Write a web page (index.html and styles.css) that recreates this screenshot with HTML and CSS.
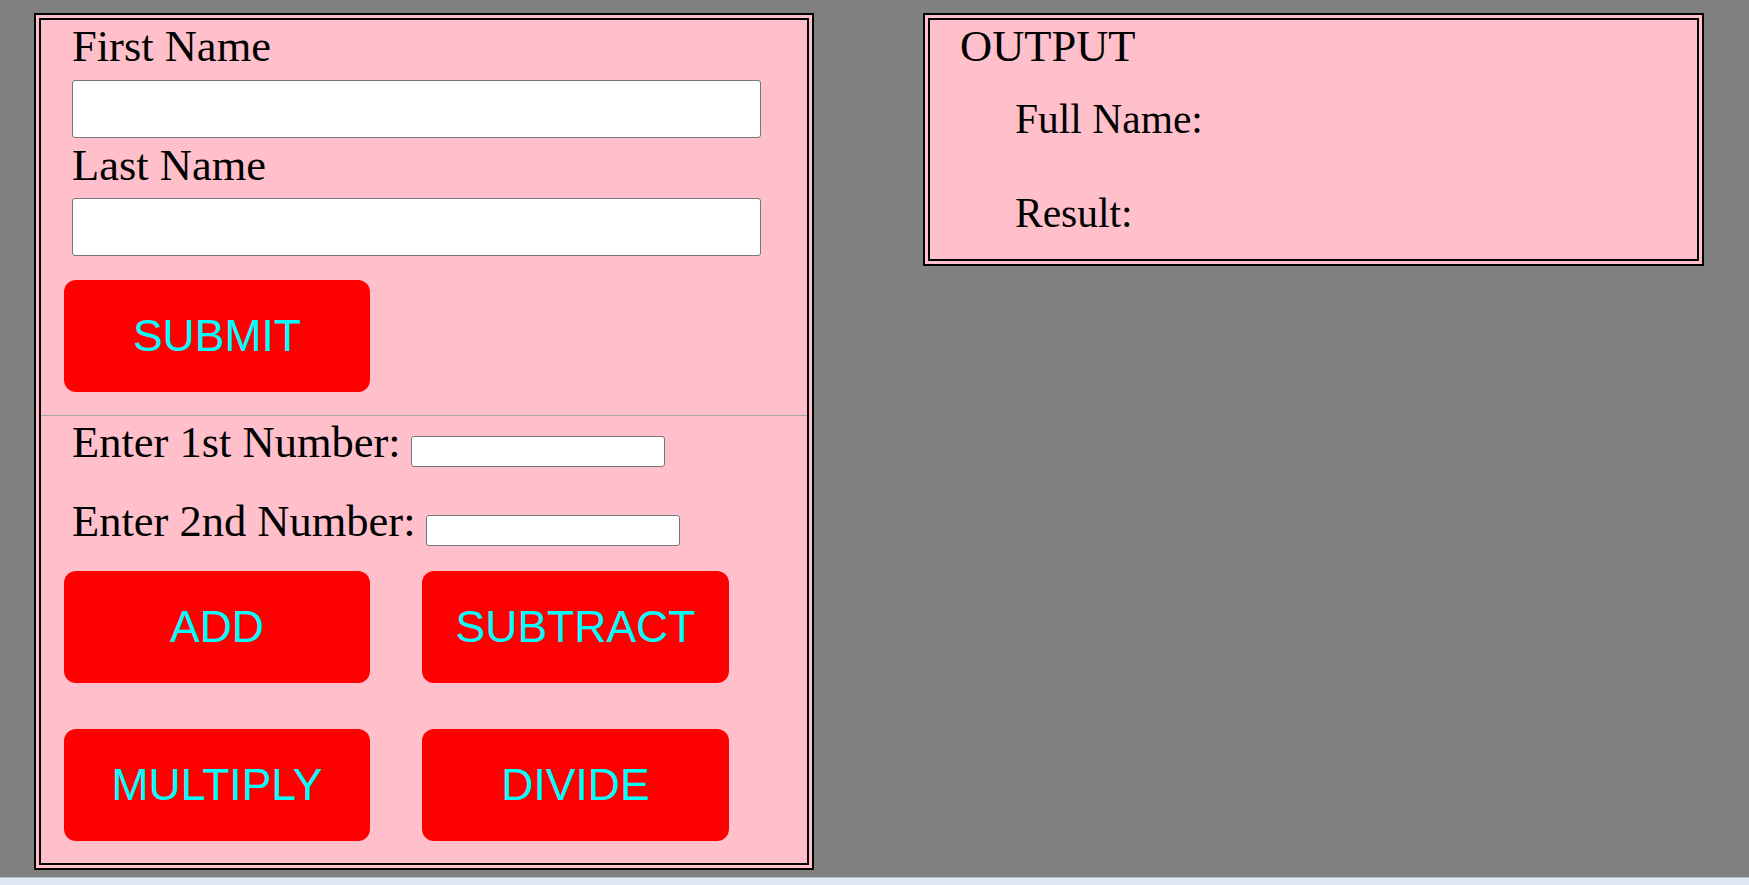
FILE: index.html
```html
<!DOCTYPE html>
<html lang="en">
<head>
<meta charset="utf-8">
<title>Calculator</title>
<link rel="stylesheet" href="styles.css">
</head>
<body>
<div class="page">
  <div class="panel panel-left">
    <div class="panel-inner">
      <div class="name-section">
        <label class="field-label">First Name</label>
        <input class="text-input first" type="text">
        <label class="field-label next">Last Name</label>
        <input class="text-input second" type="text">
        <button class="btn submit">SUBMIT</button>
      </div>
      <div class="calc-section">
        <div class="num-row">
          <label class="num-label">Enter 1st Number:</label>
          <input class="num-input" type="text">
        </div>
        <div class="num-row next-row">
          <label class="num-label">Enter 2nd Number:</label>
          <input class="num-input" type="text">
        </div>
        <div class="btn-grid">
          <button class="btn">ADD</button>
          <button class="btn">SUBTRACT</button>
          <button class="btn">MULTIPLY</button>
          <button class="btn">DIVIDE</button>
        </div>
      </div>
    </div>
  </div>
  <div class="panel panel-right">
    <div class="panel-inner output-inner">
      <div class="output-title">OUTPUT</div>
      <div class="output-line full">Full Name:</div>
      <div class="output-line result">Result:</div>
    </div>
  </div>
</div>
</body>
</html>
```

FILE: styles.css
```css
html {
  background: #e0e8f4;
}

body {
  margin: 0;
  background: #808080;
  height: 877px;
  border-bottom: 1px solid #b3bac6;
  font-family: "Liberation Serif", "Times New Roman", serif;
  color: #000;
}

.page {
  display: flex;
  align-items: flex-start;
  gap: 109px;
  padding: 13px 0 0 34px;
}

.panel {
  box-sizing: border-box;
  background: #ffc0cb;
  border: 2px solid #000;
  padding: 3px;
}

.panel-left {
  width: 780px;
}

.panel-right {
  width: 781px;
}

.panel-inner {
  border: 2px solid #000;
}

/* name section */
.name-section {
  display: flex;
  flex-direction: column;
  align-items: flex-start;
  padding: 2px 0 23px 23px;
  border-bottom: 1px solid #a8a8a8;
}

.field-label {
  display: block;
  font-size: 44.5px;
  line-height: 49px;
  margin-left: 8px;
}

.field-label.next {
  margin-top: 3px;
}

.text-input {
  box-sizing: border-box;
  display: block;
  width: 689px;
  height: 58px;
  margin: 9px 0 0 8px;
  padding: 0 4px;
  border: 1px solid #767676;
  border-radius: 3px;
  background: #fff;
}

.text-input.second {
  margin-top: 8px;
}

.btn {
  box-sizing: border-box;
  display: flex;
  align-items: center;
  justify-content: center;
  width: 306px;
  height: 112px;
  margin: 0;
  padding: 0;
  border: none;
  border-radius: 12px;
  background: #ff0000;
  color: #00ffff;
  font-family: "Liberation Sans", Arial, sans-serif;
  font-size: 44.5px;
  line-height: 1;
}

.btn.submit {
  margin-top: 24px;
}

/* calc section */
.calc-section {
  padding: 2px 0 22px 23px;
}

.num-row {
  display: flex;
  align-items: flex-end;
  gap: 10px;
  margin-left: 8px;
}

.num-row.next-row {
  margin-top: 30px;
}

.num-label {
  font-size: 44.5px;
  line-height: 49px;
}

.num-input {
  box-sizing: border-box;
  width: 254px;
  height: 31px;
  margin: 0;
  padding: 0 3px;
  border: 1px solid #767676;
  border-radius: 3px;
  background: #fff;
}

.btn-grid {
  display: grid;
  grid-template-columns: 306px 307px;
  column-gap: 52px;
  row-gap: 46px;
  margin-top: 25px;
}

.btn-grid .btn:nth-child(2n) {
  width: 307px;
}

/* output panel */
.output-inner {
  padding: 2px 0 20.8px 30px;
}

.output-title {
  font-size: 44.5px;
  line-height: 49px;
}

.output-line {
  font-size: 41.5px;
  line-height: 49px;
  margin-left: 55px;
}

.output-line.full {
  margin-top: 23.8px;
}

.output-line.result {
  margin-top: 45.4px;
}
```
